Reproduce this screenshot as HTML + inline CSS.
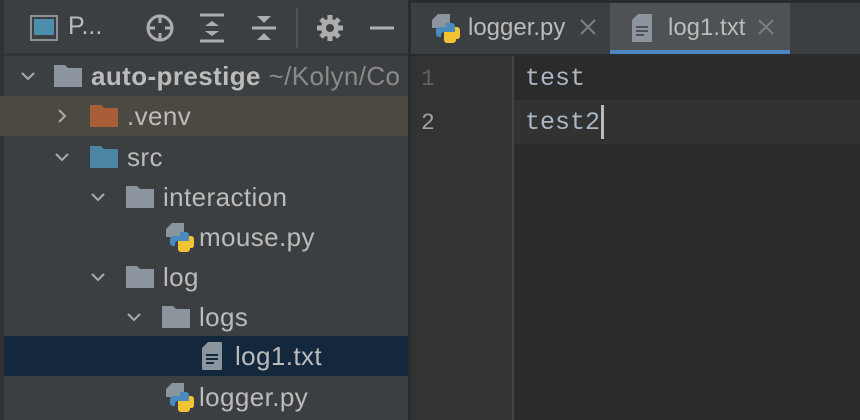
<!DOCTYPE html>
<html><head><style>
*{margin:0;padding:0;box-sizing:border-box}
body{width:860px;height:420px;overflow:hidden;background:#2b2b2b;font-family:"Liberation Sans",sans-serif;position:relative}
.abs{position:absolute}
#left{left:0;top:0;width:408px;height:420px;background:#3c3f41;border-left:4px solid #2f3133}
#top{left:0;top:0;width:860px;height:3px;background:#2b2b2b}
.row{position:absolute;left:0;width:408px;height:40px;overflow:hidden}
.t{position:absolute;font-size:26px;letter-spacing:0.4px;color:#bbbbbb;top:5px;white-space:nowrap}
.chev{position:absolute;top:10px;width:20px;height:20px}
.folder{position:absolute;top:9px;width:28px;height:22px}
</style></head><body>
<div id="top" class="abs"></div>
<div id="left" class="abs"></div>
<div class="abs" style="left:4px;top:53px;width:404px;height:3px;background:#323436"></div>
<svg class="abs" style="left:0;top:0" width="410" height="54">
<rect x="31" y="16" width="26" height="24" fill="none" stroke="#8c9297" stroke-width="2"/>
<rect x="34" y="19" width="20" height="16" fill="#4d8ead"/>
<circle cx="160" cy="28" r="12" fill="none" stroke="#adadad" stroke-width="3"/>
<path d="M160 15v8M160 33v8M147 28h8M165 28h8" stroke="#adadad" stroke-width="3"/>
<path d="M200 15h24M200 41h24" stroke="#adadad" stroke-width="3"/>
<path d="M205 26l7-5 7 5zM205 31l7 5 7-5z" fill="#adadad"/>
<path d="M252 28h24" stroke="#adadad" stroke-width="3"/>
<path d="M257 16l7 7 7-7zM257 40l7-7 7 7z" fill="#adadad"/>
<rect x="296" y="8" width="2" height="40" fill="#525557"/>
<g transform="translate(330 28)" fill="#adadad"><circle r="9"/>
<g stroke="#adadad" stroke-width="5"><path d="M0-13v26M-13 0h26M-9-9l18 18M9-9l-18 18"/></g>
<circle r="4" fill="#3c3f41"/></g>
<path d="M370 28h24" stroke="#adadad" stroke-width="3"/>
</svg>
<div class="abs" style="left:68px;top:12px;font-size:25px;color:#bbb">P...</div>

<div class="row" style="top:56px">
<svg class="chev" style="left:18px" viewBox="0 0 20 20"><path d="M4 7l6 6 6-6" fill="none" stroke="#aaa" stroke-width="2"/></svg>
<svg class="folder" style="left:54px" viewBox="0 0 28 22"><path d="M0 0h11l3 3h14v19H0z" fill="#8c959d"/></svg>
<div class="t" style="left:91px"><b>auto-prestige</b> <span style="color:#8a8a8a">~/Kolyn/Co</span></div></div>
<div class="row" style="top:96px;background:#4b4941">
<svg class="chev" style="left:52px" viewBox="0 0 20 20"><path d="M7 4l6 6-6 6" fill="none" stroke="#aaa" stroke-width="2"/></svg>
<svg class="folder" style="left:90px" viewBox="0 0 28 22"><path d="M0 0h11l3 3h14v19H0z" fill="#a85f37"/></svg>
<div class="t" style="left:127px">.venv</div></div>
<div class="row" style="top:137px">
<svg class="chev" style="left:52px" viewBox="0 0 20 20"><path d="M4 7l6 6 6-6" fill="none" stroke="#aaa" stroke-width="2"/></svg>
<svg class="folder" style="left:90px" viewBox="0 0 28 22"><path d="M0 0h11l3 3h14v19H0z" fill="#4d86a5"/></svg>
<div class="t" style="left:127px">src</div></div>
<div class="row" style="top:177px">
<svg class="chev" style="left:88px" viewBox="0 0 20 20"><path d="M4 7l6 6 6-6" fill="none" stroke="#aaa" stroke-width="2"/></svg>
<svg class="folder" style="left:126px" viewBox="0 0 28 22"><path d="M0 0h11l3 3h14v19H0z" fill="#8c959d"/></svg>
<div class="t" style="left:163px">interaction</div></div>
<div class="row" style="top:217px">
<svg class="abs" style="left:166px;top:6px" width="28" height="30" viewBox="0 0 28 30"><path d="M0 6l6-6h12v14H0z" fill="#8c959d"/><path d="M14 9h6a3 3 0 0 1 3 3v6H12a3 3 0 0 0-3 3v2H7a3 3 0 0 1-3-3v-4a3 3 0 0 1 3-3h7z" fill="#4a8abf"/><path d="M23 13v5H12v8a3 3 0 0 0 3 3h6a3 3 0 0 0 3-3v-1h2a3 3 0 0 0 2-3v-6a3 3 0 0 0-3-3z" fill="#f0c234"/></svg>
<div class="t" style="left:199px">mouse.py</div></div>
<div class="row" style="top:257px">
<svg class="chev" style="left:88px" viewBox="0 0 20 20"><path d="M4 7l6 6 6-6" fill="none" stroke="#aaa" stroke-width="2"/></svg>
<svg class="folder" style="left:126px" viewBox="0 0 28 22"><path d="M0 0h11l3 3h14v19H0z" fill="#8c959d"/></svg>
<div class="t" style="left:163px">log</div></div>
<div class="row" style="top:297px">
<svg class="chev" style="left:124px" viewBox="0 0 20 20"><path d="M4 7l6 6 6-6" fill="none" stroke="#aaa" stroke-width="2"/></svg>
<svg class="folder" style="left:162px" viewBox="0 0 28 22"><path d="M0 0h11l3 3h14v19H0z" fill="#8c959d"/></svg>
<div class="t" style="left:199px">logs</div></div>
<div class="row" style="top:336px;background:#13283d;left:4px;width:404px">
<svg class="abs" style="left:198px;top:6px" width="20" height="28" viewBox="0 0 20 28"><path d="M0 6l6-6h14v28H0z" fill="#8c959d"/><path d="M4 13h12M4 17h12M4 21h8" stroke="#13283d" stroke-width="2"/></svg>
<div class="t" style="left:231px">log1.txt</div></div>
<div class="row" style="top:377px">
<svg class="abs" style="left:166px;top:6px" width="28" height="30" viewBox="0 0 28 30"><path d="M0 6l6-6h12v14H0z" fill="#8c959d"/><path d="M14 9h6a3 3 0 0 1 3 3v6H12a3 3 0 0 0-3 3v2H7a3 3 0 0 1-3-3v-4a3 3 0 0 1 3-3h7z" fill="#4a8abf"/><path d="M23 13v5H12v8a3 3 0 0 0 3 3h6a3 3 0 0 0 3-3v-1h2a3 3 0 0 0 2-3v-6a3 3 0 0 0-3-3z" fill="#f0c234"/></svg>
<div class="t" style="left:199px">logger.py</div></div>

<div class="abs" style="left:408px;top:0;width:3px;height:420px;background:#2b2b2b"></div>
<div class="abs" style="left:411px;top:3px;width:449px;height:51px;background:#3c3f41"></div>
<div class="abs" style="left:610px;top:3px;width:180px;height:51px;background:#4e5254"></div>
<div class="abs" style="left:610px;top:50px;width:180px;height:4px;background:#4a88c7"></div>
<svg class="abs" style="left:432px;top:14px" width="28" height="30" viewBox="0 0 28 30"><path d="M0 6l6-6h12v14H0z" fill="#8c959d"/><path d="M14 9h6a3 3 0 0 1 3 3v6H12a3 3 0 0 0-3 3v2H7a3 3 0 0 1-3-3v-4a3 3 0 0 1 3-3h7z" fill="#4a8abf"/><path d="M23 13v5H12v8a3 3 0 0 0 3 3h6a3 3 0 0 0 3-3v-1h2a3 3 0 0 0 2-3v-6a3 3 0 0 0-3-3z" fill="#f0c234"/></svg>
<div class="abs" style="left:468px;top:14px;font-size:24px;color:#bbb">logger.py</div>
<svg class="abs" style="left:580px;top:19px" width="16" height="16"><path d="M1 1l14 14M15 1L1 15" stroke="#7c7f81" stroke-width="2"/></svg>
<svg class="abs" style="left:632px;top:14px" width="20" height="28" viewBox="0 0 20 28"><path d="M0 6l6-6h14v28H0z" fill="#8c959d"/><path d="M4 13h12M4 17h12M4 21h8" stroke="#4e5254" stroke-width="2"/></svg>
<div class="abs" style="left:668px;top:14px;font-size:24px;color:#bbb">log1.txt</div>
<svg class="abs" style="left:758px;top:19px" width="16" height="16"><path d="M1 1l14 14M15 1L1 15" stroke="#7c7f81" stroke-width="2"/></svg>
<div class="abs" style="left:411px;top:56px;width:101px;height:364px;background:#313335"></div>
<div class="abs" style="left:512px;top:56px;width:2px;height:364px;background:#454545"></div>
<div class="abs" style="left:514px;top:100px;width:346px;height:44px;background:#323232"></div>
<div class="abs" style="left:421px;top:66px;font-family:'Liberation Mono',monospace;font-size:23px;color:#5f6264">1</div>
<div class="abs" style="left:421px;top:110px;font-family:'Liberation Mono',monospace;font-size:23px;color:#a4a3a3">2</div>
<div class="abs" style="left:525px;top:64px;font-family:'Liberation Mono',monospace;font-size:25px;color:#a9b7c6">test</div>
<div class="abs" style="left:525px;top:108px;font-family:'Liberation Mono',monospace;font-size:25px;color:#a9b7c6">test2</div>
<div class="abs" style="left:601px;top:105px;width:3px;height:34px;background:#bbb"></div>
</body></html>
